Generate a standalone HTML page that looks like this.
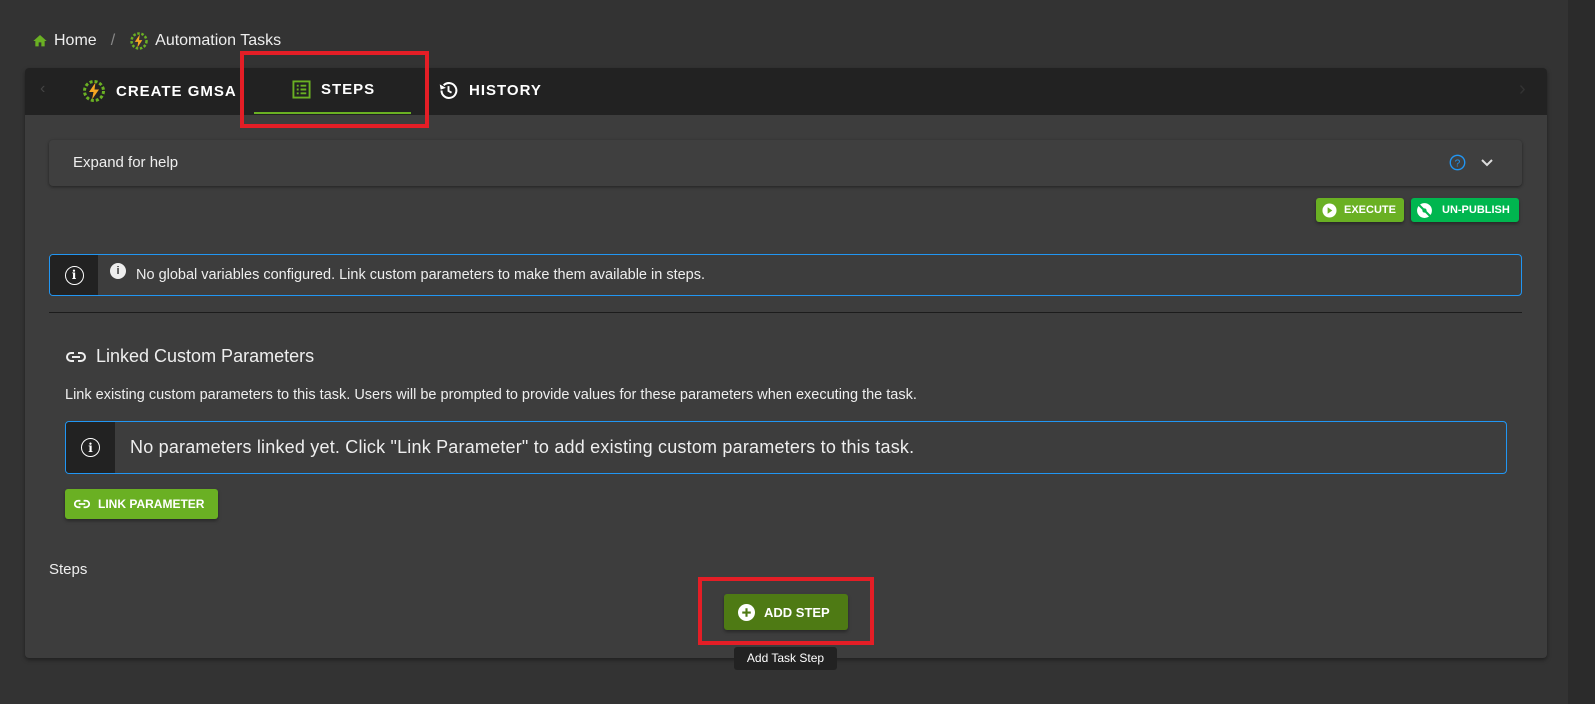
<!DOCTYPE html>
<html><head><style>
*{box-sizing:border-box;margin:0;padding:0}
body{width:1595px;height:704px;background:#333;font-family:"Liberation Sans",sans-serif;color:#eee;position:relative;overflow:hidden}
.a{position:absolute}
.rstrip{left:1568px;top:0;width:27px;height:704px;background:#2b2b2b}
.card{left:25px;top:68px;width:1522px;height:590px;background:#3d3d3d;border-radius:4px;box-shadow:0 2px 4px rgba(0,0,0,.4)}
.tabs{left:25px;top:68px;width:1522px;height:47px;background:#222;border-radius:4px 4px 0 0}
.tab{font-size:15px;font-weight:bold;letter-spacing:1px;color:#fff;display:flex;align-items:center;gap:10px}
.panel{left:49px;top:140px;width:1473px;height:46px;background:#3f3f3f;border-radius:4px;box-shadow:0 1px 3px rgba(0,0,0,.45);font-size:15px;color:#eee;padding:14px 24px}
.btn{border-radius:3px;font-size:12px;font-weight:bold;color:#fff;display:flex;align-items:center;gap:8px;box-shadow:0 2px 3px rgba(0,0,0,.35);white-space:nowrap}
.alert{border:1px solid #2196f3;border-radius:4px;display:flex;overflow:hidden}
.alert .ic{background:#222;display:flex;align-items:center;justify-content:center}
.cb{border:1.8px solid #fff;border-radius:50%;display:flex;align-items:center;justify-content:center;color:#fff;font-weight:bold;font-family:"DejaVu Serif",serif}
</style></head><body>
<div class="a rstrip"></div>
<div class="a" style="left:32px;top:31px;font-size:16px;display:flex;align-items:center;gap:6px">
<svg width="16" height="16" viewBox="0 0 24 24"><path d="M10 20v-6h4v6h5v-8h3L12 3 2 12h3v8z" fill="#6ab023"/></svg><span>Home</span>
<span style="color:#888;margin:0 8px">/</span>
<svg width="20" height="20" viewBox="0 0 24 24"><circle cx="12" cy="12" r="9" fill="none" stroke="#6ab023" stroke-width="3" stroke-dasharray="3 2"/><path d="M13 4L7 13h4l-1 7 6-9h-4z" fill="#f5a623"/></svg><span>Automation Tasks</span></div>
<div class="a card"></div>
<div class="a tabs"></div>
<div class="a" style="left:40px;top:80px;color:#444;font-size:16px">&lsaquo;</div>
<div class="a" style="left:1519px;top:78px;color:#333;font-size:20px">&rsaquo;</div>
<div class="a tab" style="left:82px;top:79px"><svg width="24" height="24" viewBox="0 0 24 24"><circle cx="12" cy="12" r="9.5" fill="none" stroke="#6ab023" stroke-width="3" stroke-dasharray="3 2"/><path d="M13.5 3.5L7 13h4.5l-1.5 7.5 7-10h-4.5z" fill="#f5a623"/></svg>CREATE GMSA</div>
<div class="a tab" style="left:292px;top:80px"><svg width="19" height="19" viewBox="0 0 20 20"><rect x="1.5" y="1.5" width="17" height="17" fill="none" stroke="#6ab023" stroke-width="2"/><path d="M5 6h2M9 6h6M5 10h2M9 10h6M5 14h2M9 14h6" stroke="#6ab023" stroke-width="2"/></svg>STEPS</div>
<div class="a" style="left:254px;top:112px;width:157px;height:2px;background:#6ab023"></div>
<div class="a tab" style="left:438px;top:80px"><svg width="21" height="21" viewBox="0 0 24 24"><path d="M4 12a8.5 8.5 0 1 0 2.5-6" fill="none" stroke="#fff" stroke-width="2.3"/><path d="M2 5l1 6 6-2z" fill="#fff"/><path d="M12 7v5.5l3.5 2" fill="none" stroke="#fff" stroke-width="2.2"/></svg>HISTORY</div>
<div class="a" style="left:240px;top:51px;width:189px;height:77px;border:4px solid #e41e26"></div>
<div class="a panel">Expand for help</div>
<div class="a" style="left:1449px;top:154px"><svg width="17" height="17" viewBox="0 0 20 20"><circle cx="10" cy="10" r="8.5" fill="none" stroke="#2196f3" stroke-width="1.6"/><text x="10" y="14.5" text-anchor="middle" font-size="12" fill="#2196f3" font-family="Liberation Sans">?</text></svg></div>
<div class="a" style="left:1480px;top:156px"><svg width="14" height="12" viewBox="0 0 14 12"><path d="M2 3l5 5 5-5" fill="none" stroke="#ddd" stroke-width="2"/></svg></div>
<div class="a btn" style="left:1316px;top:198px;width:88px;height:24px;background:#6ab023;padding-left:6px;font-size:11px;gap:7px"><svg width="15" height="15" viewBox="0 0 16 16"><circle cx="8" cy="8" r="7.5" fill="#fff"/><path d="M6 4.5v7l5-3.5z" fill="#6ab023"/></svg>EXECUTE</div>
<div class="a btn" style="left:1411px;top:198px;width:108px;height:24px;background:#00b64f;padding-left:5px;font-size:11px;gap:9px"><svg width="17" height="17" viewBox="0 0 16 16"><circle cx="8" cy="8" r="7" fill="#fff"/><path d="M2 2l12 12" stroke="#00b64f" stroke-width="2"/><circle cx="8" cy="8" r="2" fill="#00b64f"/></svg>UN-PUBLISH</div>
<div class="a alert" style="left:49px;top:254px;width:1473px;height:42px">
<div class="ic" style="width:48px"><div class="cb" style="width:19px;height:19px;font-size:12px">i</div></div>
<div style="display:flex;align-items:center;padding-left:12px;font-size:14.5px;gap:10px"><div style="width:16px;height:16px;border-radius:50%;background:#eee;color:#3d3d3d;font-size:11px;font-weight:bold;text-align:center;line-height:16px;margin-top:-8px">i</div>No global variables configured. Link custom parameters to make them available in steps.</div></div>
<div class="a" style="left:49px;top:312px;width:1473px;height:1px;background:#1c1c1c"></div>
<div class="a" style="left:66px;top:346px;font-size:18px;display:flex;align-items:center;gap:10px"><svg width="20" height="12" viewBox="0 0 20 12"><path d="M8 2H5a4 4 0 0 0 0 8h3M12 2h3a4 4 0 0 1 0 8h-3M6 6h8" fill="none" stroke="#eee" stroke-width="2"/></svg>Linked Custom Parameters</div>
<div class="a" style="left:65px;top:387px;font-size:14.5px">Link existing custom parameters to this task. Users will be prompted to provide values for these parameters when executing the task.</div>
<div class="a alert" style="left:65px;top:421px;width:1442px;height:53px">
<div class="ic" style="width:49px"><div class="cb" style="width:19px;height:19px;font-size:12px">i</div></div>
<div style="display:flex;align-items:center;padding-left:15px;font-size:18px;letter-spacing:.2px">No parameters linked yet. Click "Link Parameter" to add existing custom parameters to this task.</div></div>
<div class="a btn" style="left:65px;top:489px;width:153px;height:30px;background:#6ab023;padding-left:9px;font-size:12px"><svg width="16" height="10" viewBox="0 0 20 12"><path d="M8 2H5a4 4 0 0 0 0 8h3M12 2h3a4 4 0 0 1 0 8h-3M6 6h8" fill="none" stroke="#fff" stroke-width="2.2"/></svg>LINK PARAMETER</div>
<div class="a" style="left:49px;top:561px;font-size:15px">Steps</div>
<div class="a btn" style="left:724px;top:594px;width:124px;height:36px;background:#4e7a14;padding-left:14px;font-size:13px;gap:9px"><svg width="17" height="17" viewBox="0 0 16 16"><circle cx="8" cy="8" r="8" fill="#fff"/><path d="M8 4v8M4 8h8" stroke="#4e7a14" stroke-width="2"/></svg>ADD STEP</div>
<div class="a" style="left:698px;top:577px;width:176px;height:68px;border:4px solid #e41e26"></div>
<div class="a" style="left:734px;top:647px;width:103px;height:23px;background:#222;border-radius:3px;font-size:12px;color:#fff;text-align:center;line-height:23px">Add Task Step</div>
</body></html>
